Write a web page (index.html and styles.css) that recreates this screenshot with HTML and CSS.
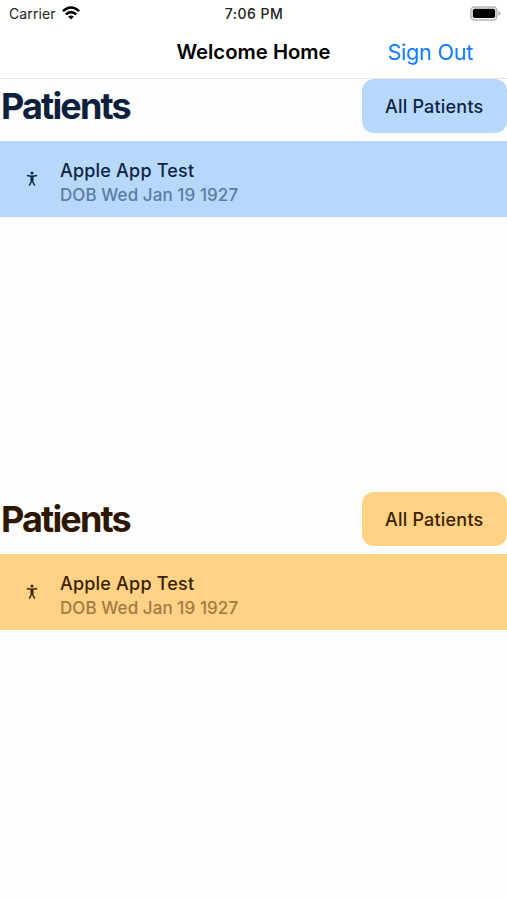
FILE: index.html
```html
<!DOCTYPE html>
<html lang="en">
<head>
<meta charset="utf-8">
<title>Welcome Home</title>
<link rel="stylesheet" href="styles.css">
</head>
<body>
<header class="header">
  <div class="status">
    <div class="carrier"><span class="carrier-name">Carrier</span>
      <svg class="wifi" viewBox="0 0 18 14" width="18" height="14"><g fill="none" stroke="#000" stroke-width="2.5"><path d="M.9 5.1Q9-2 17.1 5.1"/><path d="M3.8 8.4Q9 3.9 14.2 8.4"/></g><path d="M6.1 10.6Q9 8.3 11.9 10.6L9 13.6Z"/></svg>
    </div>
    <span class="time">7:06 PM</span>
    <svg class="battery" viewBox="0 0 31 15" width="31" height="15"><rect x=".9" y=".9" width="26" height="13" rx="3.6" fill="#fff" stroke="#b5b5b5" stroke-width="1.5"/><rect x="2.8" y="2.7" width="22.4" height="9.4" rx="1.8"/><path d="M28.5 5.2Q30.7 5.8 30.7 7.4T28.5 9.6Z" fill="#aaa"/></svg>
  </div>
  <nav class="nav">
    <h1 class="title">Welcome Home</h1>
    <a class="sign-out">Sign Out</a>
  </nav>
</header>
<main>
  <section class="group blue">
    <div class="group-head"><h2 class="heading">Patients</h2><button class="all"><span>All Patients</span></button></div>
    <div class="row">
      <svg class="person" viewBox="0 0 12 16" width="12" height="16"><circle cx="6" cy="2" r="1.5"/><path d="M.9 4.5Q6 5.9 11.1 4.5M6 9.2L3.3 14.6M6 9.2L8.7 14.6"/><path class="torso" d="M6 5V10"/></svg>
      <div class="info"><div class="name">Apple App Test</div><div class="dob">DOB Wed Jan 19 1927</div></div>
    </div>
  </section>
  <section class="group orange">
    <div class="group-head"><h2 class="heading">Patients</h2><button class="all"><span>All Patients</span></button></div>
    <div class="row">
      <svg class="person" viewBox="0 0 12 16" width="12" height="16"><circle cx="6" cy="2" r="1.5"/><path d="M.9 4.5Q6 5.9 11.1 4.5M6 9.2L3.3 14.6M6 9.2L8.7 14.6"/><path class="torso" d="M6 5V10"/></svg>
      <div class="info"><div class="name">Apple App Test</div><div class="dob">DOB Wed Jan 19 1927</div></div>
    </div>
  </section>
</main>
</body>
</html>
```
FILE: styles.css
```css
* { box-sizing: border-box; }
body {
  margin: 0;
  height: 900px;
  overflow: hidden;
  background: #fdfdfd;
  font-family: Inter, "Liberation Sans", sans-serif;
  white-space: nowrap;
}
.header {
  height: 79px;
  background: #fff;
  border-bottom: 1px solid #e6e6e6;
}
.status {
  display: grid;
  grid-template-columns: 1fr auto 1fr;
  height: 27px;
  align-items: center;
  padding: 0 6px 0 7px;
  font-size: 14px;
  line-height: 18px;
  color: #222;
}
.carrier { display: flex; align-items: center; gap: 6px; padding-left: 2px; }
.carrier-name { letter-spacing: 0.1px; }
.wifi { margin-top: -2px; }
.time { font-weight: 500; letter-spacing: 0.5px; }
.battery { justify-self: end; }
.nav {
  display: grid;
  grid-template-columns: 1fr auto 1fr;
  height: 50px;
  align-items: center;
}
.title {
  grid-column: 2;
  margin: 0;
  font-size: 20.3px;
  font-weight: 600;
  line-height: 26px;
}
.sign-out {
  justify-self: end;
  margin-right: 34px;
  font-size: 21.5px;
  line-height: 28px;
  letter-spacing: -0.2px;
  color: #0a7cff;
}
.group { height: 413px; }
.blue { --fill: #b8d8fb; --ink: #0d213d; --text: #0c2442; --muted: #5c7ca1; }
.orange { --fill: #ffd286; --ink: #2e1700; --text: #3b2200; --muted: #a17a43; }
.group-head {
  display: flex;
  justify-content: space-between;
  height: 62px;
}
.heading {
  margin: 0 0 0 1px;
  font-size: 36px;
  font-weight: 700;
  line-height: 54px;
  letter-spacing: -1.85px;
  color: var(--ink);
}
.all {
  width: 145.5px;
  height: 54px;
  padding: 1px 0 0;
  border: 0;
  border-radius: 12px;
  background: var(--fill);
  color: var(--text);
  font: 500 18px/24px Inter, sans-serif;
  letter-spacing: 0.2px;
}
.row {
  display: flex;
  height: 76px;
  padding: 17.5px 0 0 26px;
  background: var(--fill);
}
.person {
  margin-top: 12px;
  fill: var(--text);
}
.person path { fill: none; stroke: var(--text); stroke-width: 1.4; }
.person .torso { stroke-width: 3; }
.info { margin-left: 22px; }
.name {
  font-size: 18px;
  font-weight: 500;
  line-height: 24px;
  letter-spacing: 0.2px;
  color: var(--text);
}
.dob {
  font-size: 17px;
  font-weight: 500;
  line-height: 24px;
  letter-spacing: 0.08px;
  color: var(--muted);
}
```
